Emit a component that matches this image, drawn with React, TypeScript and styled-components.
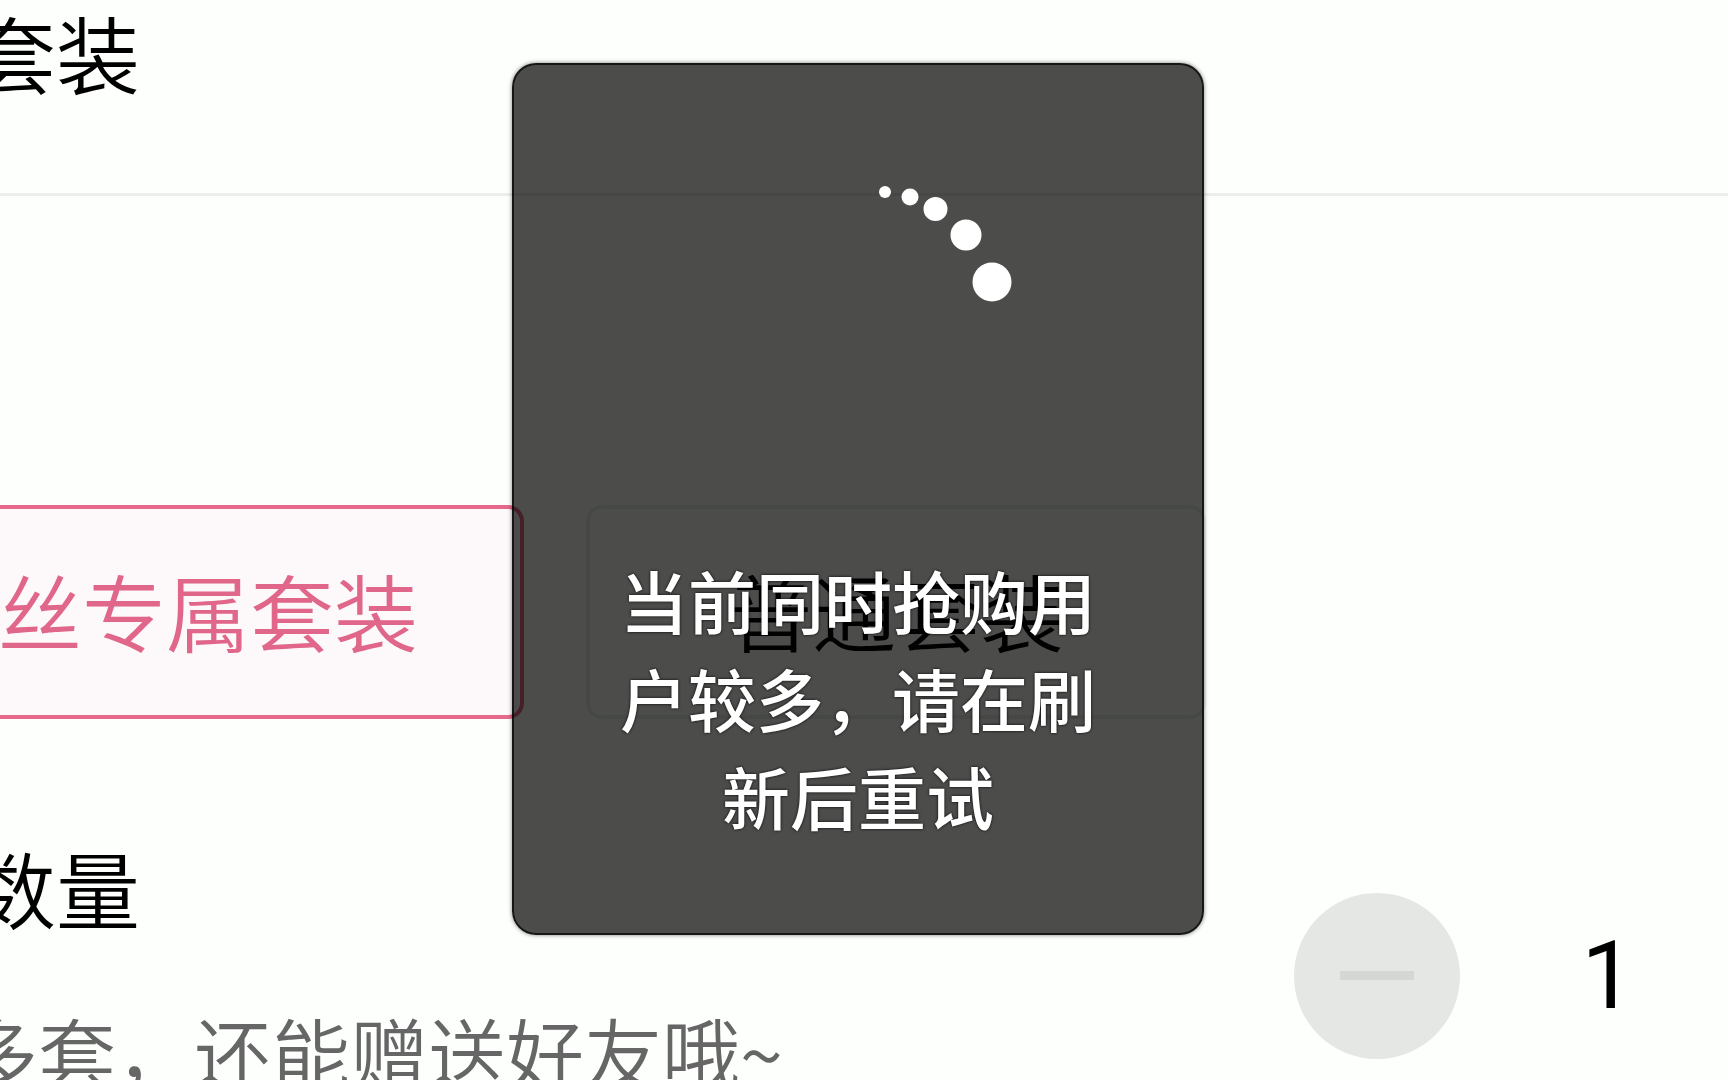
import React from "react";
import styled, { createGlobalStyle } from "styled-components";

const Global = createGlobalStyle`
  * { box-sizing: border-box; }
  body { margin: 0; background: #fdfffc; overflow: hidden; }
`;

const Page = styled.main`
  height: 100vh;
  overflow: hidden;
  color: #000;
  background: #fdfffc;
  font-family: "Noto Sans CJK SC", sans-serif;
  font-weight: 350;
`;

const Title = styled.h2`
  display: block;
  margin: 0 0 0 -28px;
  font-size: 84px;
  line-height: 104px;
  font-weight: 350;
  white-space: nowrap;
`;

const Header = styled.header`
  height: 196px;
  border-bottom: 3px solid #eceeeb;
`;

const Options = styled.div`
  display: flex;
  gap: 62px;
  margin: 309px 0 0 -28px;
`;

const Option = styled.button<{ $active?: boolean }>`
  height: 214px;
  padding: 0 ${(p) => (p.$active ? "102px 4px 22px" : "138px 4px")};
  border: 4px solid ${(p) => (p.$active ? "#e6688a" : "#eceeeb")};
  border-radius: 16px;
  background: ${(p) => (p.$active ? "#fdf8fa" : "#fdfffc")};
  color: ${(p) => (p.$active ? "#e0668a" : "#000")};
  font: inherit;
  font-size: 84px;
  line-height: 104px;
  white-space: nowrap;
`;

const QuantityRow = styled.section`
  display: flex;
  justify-content: space-between;
  align-items: flex-start;
  margin-top: 116px;
  padding-right: 80px;
`;

const Note = styled.p`
  margin: 56px 0 0 -40px;
  color: #666;
  font-size: 78px;
  line-height: 112px;
  white-space: nowrap;
`;

const Stepper = styled.div`
  display: flex;
  align-items: center;
  gap: 108px;
  margin-top: 58px;
`;

const Minus = styled.button`
  display: grid;
  place-items: center;
  width: 166px;
  height: 166px;
  padding: 0;
  border: 0;
  border-radius: 50%;
  background: #e5e7e4;
`;

const Count = styled.input`
  width: 80px;
  padding: 0;
  border: 0;
  background: transparent;
  color: #000;
  font: 400 94px/112px Roboto, sans-serif;
  text-align: center;
`;

const Toast = styled.div`
  position: absolute;
  top: 63px;
  left: calc(50% - 352px);
  width: 692px;
  height: 872px;
  padding: 112px 94px 0;
  display: flex;
  flex-direction: column;
  align-items: center;
  border: 2px solid rgba(0, 0, 0, 0.7);
  border-radius: 24px;
  background: rgba(0, 1, 0, 0.7);
  box-shadow: 0 0 4px rgba(0, 0, 0, 0.5);
`;

const Spinner = styled.svg`
  display: block;
  width: 280px;
  height: 280px;
`;

const Message = styled.p`
  margin: 94px 0 0;
  color: #fff;
  font-size: 68px;
  line-height: 98px;
  font-weight: 500;
  text-align: center;
  text-shadow: 0 0 3px #000;
`;

export default function App() {
  return (
    <Page>
      <Global />
      <Header>
        <Title>套装</Title>
      </Header>
      <Options>
        <Option type="button" $active>丝专属套装</Option>
        <Option type="button">普通套装</Option>
      </Options>
      <QuantityRow>
        <div>
          <Title as="label" htmlFor="count">数量</Title>
          <Note>多套，还能赠送好友哦~</Note>
        </div>
        <Stepper>
          <Minus type="button" aria-label="减少">
            <svg width="74" height="10" viewBox="0 0 74 10">
              <rect width="74" height="9" fill="#d5d7d4" />
            </svg>
          </Minus>
          <Count id="count" defaultValue="1" inputMode="numeric" />
        </Stepper>
      </QuantityRow>
      <Toast role="status">
        <Spinner viewBox="718 177 280 280" fill="#fff" overflow="visible" aria-hidden="true">
          <circle cx="885" cy="192" r="6" />
          <circle cx="910" cy="197" r="8.5" />
          <circle cx="935.5" cy="209" r="12" />
          <circle cx="966" cy="235" r="15.5" />
          <circle cx="992" cy="282" r="19.5" />
        </Spinner>
        <Message>当前同时抢购用户较多，请在刷新后重试</Message>
      </Toast>
    </Page>
  );
}
